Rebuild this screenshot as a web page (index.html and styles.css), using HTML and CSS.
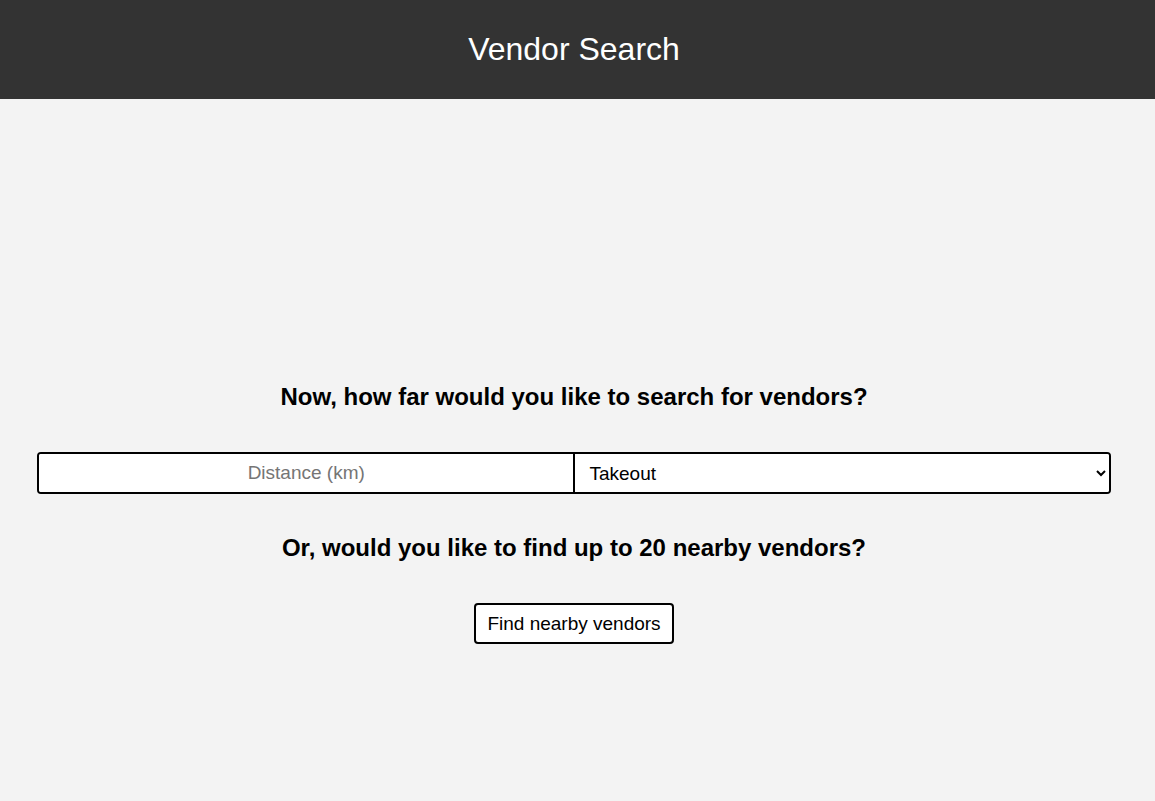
FILE: index.html
```html
<!DOCTYPE html>
<html>
<head>
<meta charset="utf-8">
<title>Vendor Search</title>
<link rel="stylesheet" href="styles.css">
</head>
<body>
<header class="top-bar">
  <h1 class="title">Vendor Search</h1>
</header>
<main class="content">
  <h2 class="question">Now, how far would you like to search for vendors?</h2>
  <div class="search-row">
    <input class="distance" type="text" placeholder="Distance (km)">
    <select class="mode">
      <option>Takeout</option>
      <option>Delivery</option>
    </select>
  </div>
  <h2 class="question alt">Or, would you like to find up to 20 nearby vendors?</h2>
  <div class="btn-row">
    <button class="nearby">Find nearby vendors</button>
  </div>
</main>
</body>
</html>
```
FILE: styles.css
```css
* { box-sizing: border-box; }
html, body { margin: 0; padding: 0; }
body {
  background: #f3f3f3;
  font-family: "Liberation Sans", Arial, sans-serif;
  color: #000;
  min-height: 801px;
}
.top-bar {
  background: #333333;
  height: 99px;
  display: flex;
  align-items: center;
  justify-content: center;
  padding-right: 7px;
}
.title {
  margin: 0;
  color: #fff;
  font-weight: normal;
  font-size: 32px;
}
.content {
  padding: 284px 44px 0 37px;
}
.question {
  margin: 0;
  text-align: center;
  font-size: 24px;
  font-weight: bold;
}
.search-row {
  display: grid;
  grid-template-columns: 537fr 534fr;
  margin: 41px 0 0 0;
  height: 42px;
  border: 2px solid #000;
  border-radius: 4px;
  background: #fff;
  overflow: hidden;
}
.distance {
  width: 100%;
  min-width: 0;
  border: none;
  border-right: 2px solid #000;
  font-family: "Liberation Sans", Arial, sans-serif;
  font-size: 19px;
  text-align: center;
  outline: none;
  background: #fff;
}
.distance::placeholder { color: #757575; }
.mode {
  width: 100%;
  min-width: 0;
  border: none;
  font-family: "Liberation Sans", Arial, sans-serif;
  font-size: 19px;
  padding-left: 10px;
  background: #fff;
  color: #000;
  outline: none;
}
.alt { margin-top: 40px; }
.btn-row {
  display: flex;
  justify-content: center;
  margin-top: 41px;
}
.nearby {
  background: #fff;
  border: 2px solid #000;
  border-radius: 4px;
  font-family: "Liberation Sans", Arial, sans-serif;
  font-size: 19px;
  height: 41px;
  padding: 0 11px;
  color: #000;
}
```
